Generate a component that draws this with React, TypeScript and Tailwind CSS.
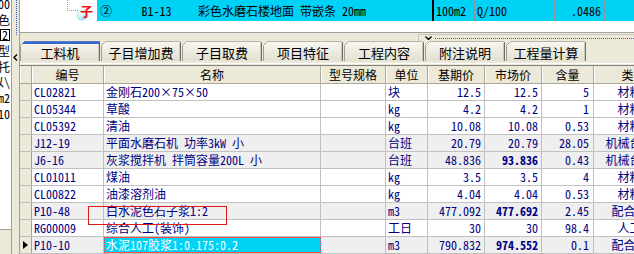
import type { ReactNode } from 'react'

type Row = {
  code: string
  name: string
  unit: string
  base: string
  market: string
  qty: string
  kind: string
  shaded?: boolean
  bold?: boolean
  current?: boolean
}

const rows: Row[] = [
  { code: 'CL02821', name: '金刚石200×75×50', unit: '块', base: '12.5', market: '12.5', qty: '5', kind: '材料' },
  { code: 'CL05344', name: '草酸', unit: 'kg', base: '4.2', market: '4.2', qty: '1', kind: '材料' },
  { code: 'CL05392', name: '清油', unit: 'kg', base: '10.08', market: '10.08', qty: '0.53', kind: '材料' },
  { code: 'J12-19', name: '平面水磨石机 功率3kW 小', unit: '台班', base: '20.79', market: '20.79', qty: '28.05', kind: '机械台班', shaded: true },
  { code: 'J6-16', name: '灰浆搅拌机 拌筒容量200L 小', unit: '台班', base: '48.836', market: '93.836', qty: '0.43', kind: '机械台班', shaded: true, bold: true },
  { code: 'CL01011', name: '煤油', unit: 'kg', base: '3.5', market: '3.5', qty: '4', kind: '材料' },
  { code: 'CL00822', name: '油漆溶剂油', unit: 'kg', base: '4.04', market: '4.04', qty: '0.53', kind: '材料' },
  { code: 'P10-48', name: '白水泥色石子浆1:2', unit: 'm3', base: '477.092', market: '477.692', qty: '2.45', kind: '配合比', shaded: true, bold: true },
  { code: 'RG00009', name: '综合人工(装饰)', unit: '工日', base: '30', market: '30', qty: '98.4', kind: '人工' },
  { code: 'P10-10', name: '水泥107胶浆1:0.175:0.2', unit: 'm3', base: '790.832', market: '974.552', qty: '0.1', kind: '配合比', shaded: true, bold: true, current: true },
]

const tabs = ['工料机', '子目增加费', '子目取费', '项目特征', '工程内容', '附注说明', '工程量计算']

const cols = 'grid grid-cols-[12px_72px_217px_65px_42px_57px_57px_52px_72px]'
const cell = 'flex items-center overflow-hidden whitespace-nowrap border-r border-[#c0c0c0]'
const head = 'flex items-center justify-center overflow-hidden whitespace-nowrap border-r border-[#aca899] shadow-[inset_1px_0_0_#ffffff]'

function LeftPanel() {
  const lines: ReactNode[] = [
    '1.00',
    '彩色',
    <span key="b" className="border border-black px-[1px] leading-[10px]">2</span>,
    '类型',
    '托',
    '以\\',
    'm2',
    '10',
  ]
  return (
    <div className="flex w-[12px] flex-col">
      <div className="flex h-[230px] flex-col overflow-hidden border-r border-b border-[#a0a0a0] bg-white text-black">
        <div className="mt-[-4px]" />
        {lines.map((l, i) => (
          <div key={i} className="flex h-[15.7px] shrink-0 items-center justify-end whitespace-nowrap pr-[1px] text-[12px]">
            {l}
          </div>
        ))}
      </div>
      <div className="flex-1 border-r border-[#a0a0a0]" />
    </div>
  )
}

function VSplitter() {
  return (
    <div className="flex w-[7px] flex-col">
      <div className="ml-[4px] h-[35px] border-l border-dotted border-[#3a5fcd]" />
      <svg className="ml-[1px] mt-[19px]" width="5" height="7" viewBox="0 0 5 7">
        <path d="M4 0.5L1 3.5L4 6.5" fill="none" stroke="#000" strokeWidth="1.4" />
      </svg>
    </div>
  )
}

function TopRow() {
  return (
    <div className="h-[37px] border-b border-[#a0a0a0] bg-white">
      <div className="flex h-[21px] text-[12px] text-black">
        <div className="relative w-[77px]">
          <svg className="absolute inset-0" width="77" height="21" viewBox="0 0 77 21">
            <path d="M47.5 0V10.5H59" fill="none" stroke="#9a9a9a" strokeDasharray="1 1" />
            <defs>
              <radialGradient id="ball" cx="0.4" cy="0.35" r="0.7">
                <stop offset="0" stopColor="#ffffff" />
                <stop offset="1" stopColor="#8fd8f0" />
              </radialGradient>
            </defs>
            <circle cx="62" cy="15" r="5.5" fill="url(#ball)" />
          </svg>
          <span className="absolute left-[60px] top-[4px] text-[13px] font-bold text-[#ee1111]">子</span>
        </div>
        <div className="flex flex-1 bg-[#00d2f6]">
          <div className="flex w-[19px] items-center justify-center border-r border-[#8c9aa0]">②</div>
          <div className="flex w-[82px] items-center justify-center border-r border-[#8c9aa0]">B1-13</div>
          <div className="flex w-[236px] items-center whitespace-nowrap border-r-2 border-black">彩色水磨石楼地面 带嵌条 20mm</div>
          <div className="flex w-[41px] items-center border-r border-[#8c9aa0] pl-[2px]">100m2</div>
          <div className="flex w-[80px] items-center border-r border-[#8c9aa0] pl-[2px]">Q/100</div>
          <div className="flex w-[50px] items-center justify-end border-r border-[#8c9aa0] pr-[3px]">.0486</div>
          <div className="flex-1" />
        </div>
      </div>
    </div>
  )
}

function HSplitter() {
  return (
    <div className="flex h-[9px]">
      <div className="w-[398px]" />
      <div className="mt-[1px] flex h-[7px] flex-1 items-center border-l border-t border-[#c9c6b6]">
        <svg className="ml-[6px]" width="7" height="4" viewBox="0 0 7 4">
          <path d="M0.5 0.5L3.5 3.5L6.5 0.5" fill="none" stroke="#000" strokeWidth="1.3" />
        </svg>
        <div className="ml-[3px] flex-1 border-t border-dotted border-[#3a5fcd]" />
      </div>
    </div>
  )
}

function Tab({ label, active }: { label: string; active?: boolean }) {
  return (
    <div className="relative flex h-[20px] w-[80px] shrink-0 items-center justify-center bg-gradient-to-b from-[#f8f7f2] to-[#e3e0d1] pt-[3px] text-[13px] text-black [clip-path:polygon(4px_0,100%_0,100%_100%,0_100%,0_4px)]">
      <svg className="absolute inset-0" width="80" height="20" viewBox="0 0 80 20">
        <path d="M0.5 20V4.5L4.5 0.5H79" fill="none" stroke="#a19e8f" />
        <path d="M79.5 1V20" stroke="#6f6d64" />
        <path d="M78.5 2V20" stroke="#cac7b7" />
        {active && <path d="M4.5 0H80V3H2Z" fill="#3569d0" />}
      </svg>
      <span className="relative">{label}</span>
    </div>
  )
}

function Grid() {
  return (
    <div className="border-t border-[#808080]">
      <div className={`${cols} h-[18px] border-b border-[#aca899] bg-[#ece9d8] text-[12px] text-black`}>
        <div className={head} />
        <div className={head}>编号</div>
        <div className={head}>名称</div>
        <div className={head}>型号规格</div>
        <div className={head}>单位</div>
        <div className={head}>基期价</div>
        <div className={head}>市场价</div>
        <div className={head}>含量</div>
        <div className={`${head} pl-[8px]`}>类别</div>
      </div>
      {rows.map((r) => (
        <div
          key={r.code}
          className={`${cols} h-[17px] border-b border-[#c0c0c0] text-[12px] text-[#000080] ${r.shaded ? 'bg-[#efefef]' : 'bg-white'}`}
        >
          <div className="flex items-center justify-center border-r border-[#a0a0a0] bg-[#ece9d8]">
            {r.current && (
              <svg width="5" height="8" viewBox="0 0 5 8">
                <path d="M0 0L5 4L0 8Z" fill="#000" />
              </svg>
            )}
          </div>
          <div className={`${cell} pl-[2px]`}>{r.code}</div>
          {r.current ? (
            <div className="flex items-center overflow-hidden whitespace-nowrap border border-dotted border-[#ff3b3b] bg-[#00d2f6] pl-[1px] text-white">
              {r.name}
            </div>
          ) : (
            <div className={`${cell} pl-[2px]`}>{r.name}</div>
          )}
          <div className={cell} />
          <div className={`${cell} pl-[2px]`}>{r.unit}</div>
          <div className={`${cell} justify-end pr-[3px]`}>{r.base}</div>
          <div className={`${cell} justify-end pr-[3px] ${r.bold ? 'font-bold' : ''}`}>{r.market}</div>
          <div className={`${cell} justify-end pr-[4px]`}>{r.qty}</div>
          <div className={`${cell} justify-center`}>{r.kind}</div>
        </div>
      ))}
    </div>
  )
}

export default function App() {
  return (
    <div className="relative flex h-[254px] w-[634px] overflow-hidden bg-[#ece9d8] font-['Noto_Sans_Mono_CJK_SC','Noto_Sans_CJK_SC',sans-serif] leading-none">
      <LeftPanel />
      <VSplitter />
      <main className="flex min-w-0 flex-1 flex-col overflow-hidden border-l border-[#9d9d9d]">
        <TopRow />
        <HSplitter />
        <div className="flex h-[20px] gap-px">
          {tabs.map((t, i) => (
            <Tab key={t} label={t} active={i === 0} />
          ))}
        </div>
        <div className="h-[4px] pt-[2px]">
          <div className="h-px bg-white" />
        </div>
        <Grid />
      </main>
      <div className="pointer-events-none absolute left-[88px] top-[206px] h-[19px] w-[139px] border-[1.5px] border-[#e11919]" />
    </div>
  )
}
